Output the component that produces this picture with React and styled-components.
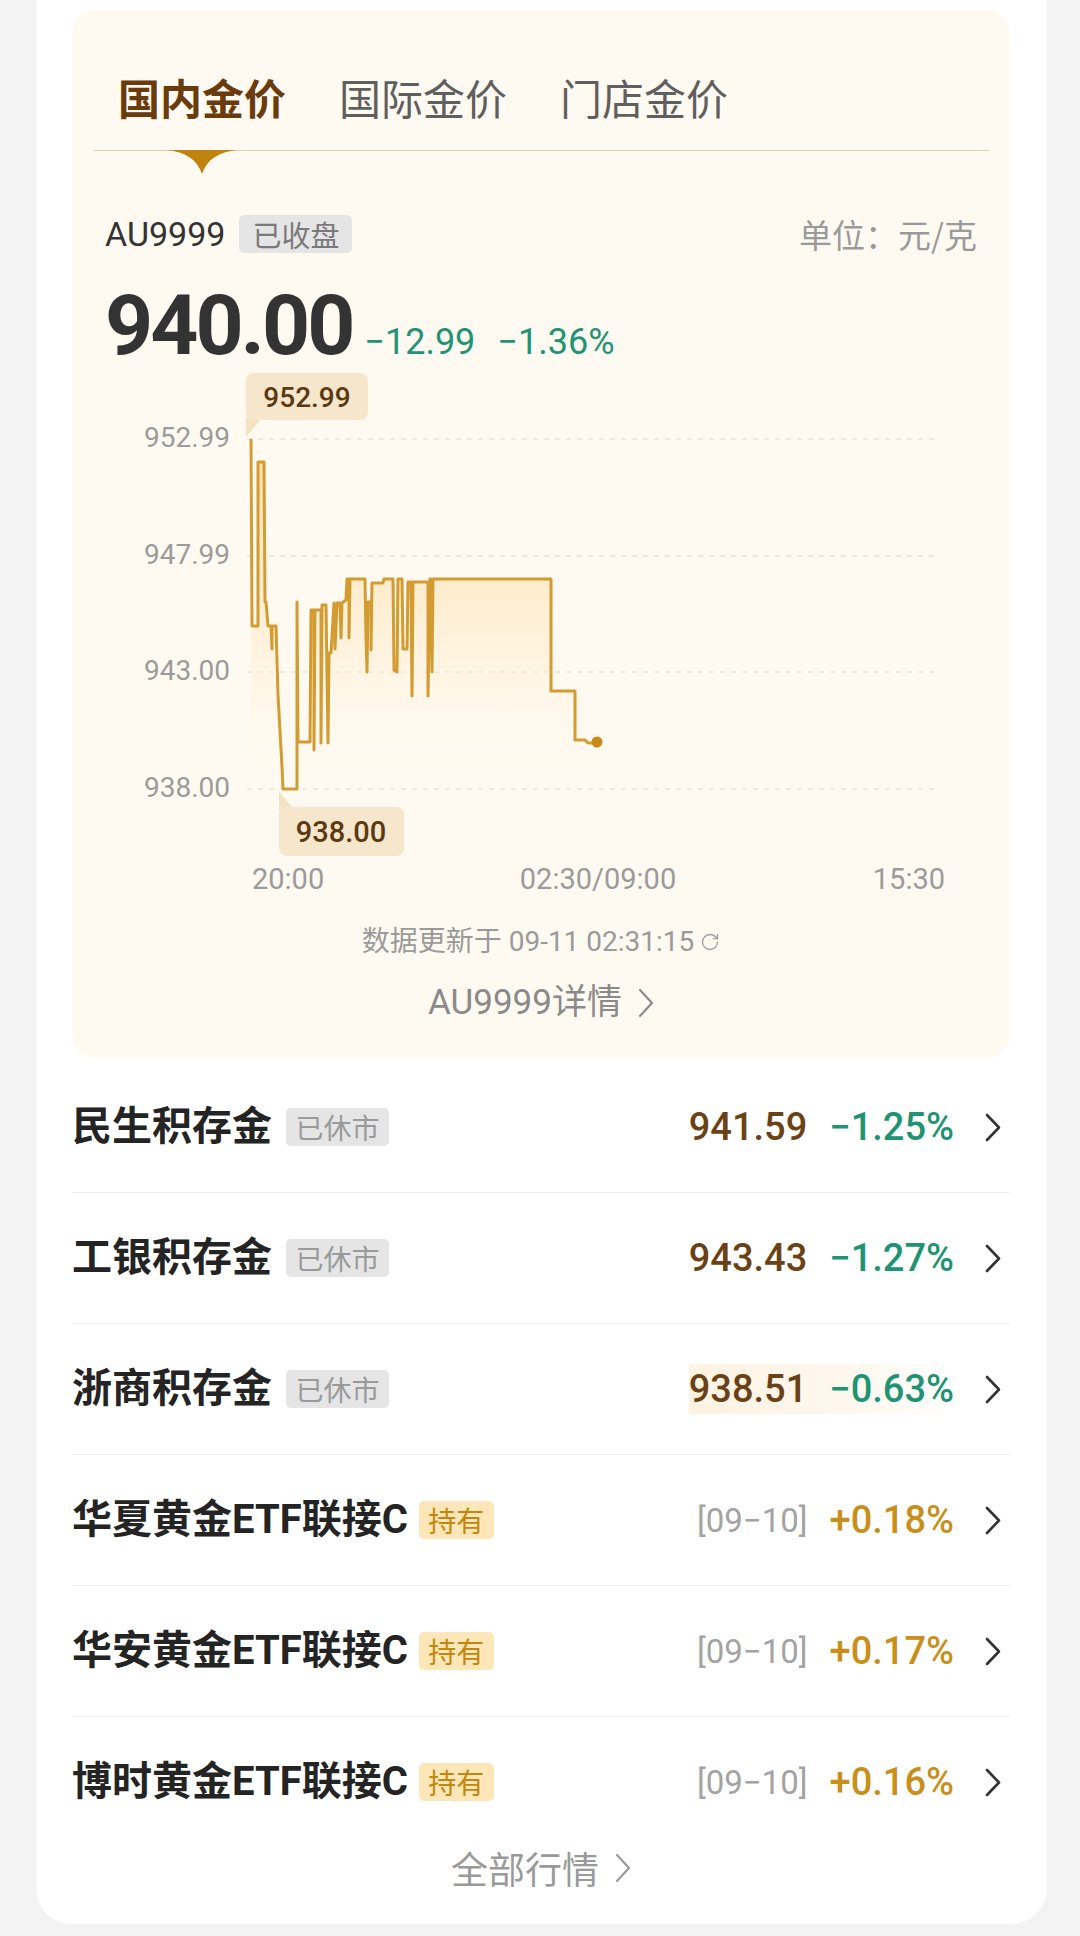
import React from "react";
import styled, { createGlobalStyle } from "styled-components";
import { RotateCw } from "lucide-react";

const GlobalStyle = createGlobalStyle`
  html, body { margin: 0; padding: 0; }
  body {
    background: #f3f3f3;
    font-family: Roboto, "Noto Sans CJK SC", sans-serif;
    -webkit-font-smoothing: antialiased;
  }
`;

const Page = styled.div`
  padding: 0 33px 12px 36px;
`;

const Sheet = styled.div`
  background: #ffffff;
  border-radius: 0 0 36px 36px;
  padding: 10px 37px 36px 36px;
`;

const QuoteCard = styled.section`
  background: #fffaf1;
  border-radius: 24px;
  padding: 0 21px 38px;
`;

const TabBar = styled.div`
  display: flex;
  gap: 53px;
  padding: 66px 0 32px 25px;
  border-bottom: 1px solid #e2d2ae;
`;

const Tab = styled.div`
  position: relative;
  font-size: 42px;
  line-height: 1;
  font-family: "Noto Sans CJK SC", sans-serif;
  font-weight: ${(p) => (p.$active ? 700 : 400)};
  color: ${(p) => (p.$active ? "#6a3b0c" : "#5f5f5f")};
`;

const Indicator = styled.svg`
  position: absolute;
  top: calc(100% + 32px);
  left: 50%;
  transform: translateX(-50%);
  display: block;
`;

const Body = styled.div`
  padding: 0 12px;
`;

const InfoRow = styled.div`
  display: flex;
  align-items: center;
  justify-content: space-between;
  margin-top: 64px;
  height: 38px;
`;

const SymbolGroup = styled.div`
  display: flex;
  align-items: center;
  gap: 14px;
`;

const Symbol = styled.span`
  font-size: 34px;
  line-height: 1;
  color: #333;
`;

const Tag = styled.span`
  display: inline-flex;
  align-items: center;
  height: 38px;
  padding: 0 ${(p) => (p.$wide ? 13 : 9.5)}px;
  border-radius: 5px;
  font-family: "Noto Sans CJK SC", sans-serif;
  font-size: ${(p) => (p.$wide ? 29 : 28)}px;
  line-height: 1;
  background: ${(p) => (p.$tone === "hold" ? "#fde7b8" : "#e5e5e5")};
  color: ${(p) => (p.$tone === "hold" ? "#c4860c" : p.$wide ? "#7a7a7a" : "#9a9a9a")};
  margin-left: ${(p) => p.$gap || 0}px;
`;

const Unit = styled.span`
  font-family: "Noto Sans CJK SC", sans-serif;
  font-size: 33px;
  line-height: 1;
  color: #9a9a9a;
`;

const PriceRow = styled.div`
  display: flex;
  align-items: baseline;
  margin-top: 31px;
`;

const BigPrice = styled.span`
  font-size: 84px;
  line-height: 1;
  font-weight: 700;
  color: #333;
  letter-spacing: -3px;
`;

const HeadChange = styled.span`
  font-size: 36px;
  line-height: 1;
  color: #1e9474;
  margin-left: ${(p) => p.$gap}px;
`;

const ChartSvg = styled.svg`
  display: block;
  font-family: Roboto, sans-serif;
`;

const UpdateLine = styled.div`
  display: flex;
  justify-content: center;
  align-items: center;
  gap: 6px;
  margin-top: 28px;
  font-size: 28px;
  line-height: 28px;
  color: #9a9a9a;
`;

const DetailLink = styled.div`
  display: flex;
  justify-content: center;
  align-items: center;
  gap: 16px;
  margin-top: 29px;
  font-size: 35px;
  line-height: 35px;
  color: #8a8a8a;
`;

const List = styled.div`
  margin-top: 4px;
`;

const Row = styled.div`
  display: flex;
  align-items: center;
  height: 130px;
  padding-right: 9px;
  border-bottom: 1px solid ${(p) => (p.$last ? "transparent" : "#eeeeee")};
`;

const Name = styled.span`
  font-size: 40px;
  line-height: 1;
  font-weight: 700;
  color: #242424;
`;

const Values = styled.div`
  margin-left: auto;
  display: flex;
  align-items: center;
  height: 50px;
  background: ${(p) =>
    p.$flash ? "linear-gradient(90deg, #fdf3e2 0%, #fdf7ee 60%, rgba(255,255,255,0) 100%)" : "transparent"};
`;

const Price = styled.span`
  font-size: 38px;
  line-height: 1;
  font-weight: 500;
  color: #6a4215;
`;

const DateTag = styled.span`
  font-size: 33px;
  line-height: 1;
  color: #a3a3a3;
`;

const Pct = styled.span`
  font-size: 38px;
  line-height: 1;
  font-weight: 500;
  margin-left: 22px;
  color: ${(p) => (p.$up ? "#c8901a" : "#1e9474")};
`;

const Chevron = styled.svg`
  display: block;
  margin-left: 31px;
  flex: none;
`;

const Footer = styled.div`
  display: flex;
  justify-content: center;
  align-items: center;
  gap: 16px;
  height: 40px;
  font-size: 37px;
  color: #9a9a9a;
`;

const pts = [[251,439],[252,626],[258,626],[258,462],[264,462],[265,602],[266,602],[268,626],[271,626],[272,649],[272,626],[276,626],[278,695],[282,767],[283,789],[297,789],[297,602],[298,742],[310,742],[311,610],[314,610],[314,750],[315,610],[321,610],[321,743],[322,605],[326,605],[328,743],[329,653],[331,653],[334,603],[335,649],[337,603],[340,603],[341,638],[342,603],[346,600],[347,579],[349,579],[349,638],[350,579],[365,579],[366,638],[367,672],[368,602],[371,602],[371,650],[372,583],[383,583],[384,579],[393,579],[394,670],[397,672],[398,579],[402,579],[403,649],[407,649],[408,582],[411,582],[412,696],[413,582],[428,582],[428,696],[430,579],[431,579],[432,672],[433,579],[551,579],[551,691],[575,691],[575,740],[585,740],[588,743],[597,743]];

const lineD = "M" + pts.map((p) => p.join(",")).join(" L");
const fillD = lineD + " L597,789 L251,789 Z";

const grid = [
  { y: 439, label: "952.99" },
  { y: 556, label: "947.99" },
  { y: 672, label: "943.00" },
  { y: 789, label: "938.00" },
];

function Chart() {
  return (
    <ChartSvg width="873" height="532" viewBox="105 368 873 532">
      <defs>
        <linearGradient id="gfill" x1="0" y1="440" x2="0" y2="780" gradientUnits="userSpaceOnUse">
          <stop offset="0" stopColor="#fbd592" stopOpacity="0.8" />
          <stop offset="0.45" stopColor="#fde4b8" stopOpacity="0.6" />
          <stop offset="1" stopColor="#fff6e6" stopOpacity="0" />
        </linearGradient>
      </defs>
      {grid.map((g) => (
        <g key={g.label}>
          <line x1="247" x2="940" y1={g.y} y2={g.y} stroke="#ebe4d8" strokeWidth="1.5" strokeDasharray="5 6" />
          <text x="230" y={g.y - 2} dy="0.36em" textAnchor="end" fontSize="28" fill="#9b9b9b">
            {g.label}
          </text>
        </g>
      ))}
      <path d={fillD} fill="url(#gfill)" />
      <path d={lineD} fill="none" stroke="#d29c32" strokeWidth="3" strokeLinejoin="round" />
      <circle cx="597" cy="742" r="5.5" fill="#c98a17" />

      <polygon points="246,417 263,417 246,437" fill="#f3e2c4" />
      <rect x="246" y="373" width="122" height="47" rx="8" fill="#f6e6cb" />
      <text x="307" y="397" dy="0.36em" textAnchor="middle" fontSize="28" fontWeight="500" fill="#5b3911">
        952.99
      </text>

      <polygon points="279,811 295,811 279,791" fill="#f3e2c4" />
      <rect x="279" y="807" width="125" height="49" rx="8" fill="#f6e6cb" />
      <text x="341" y="832" dy="0.36em" textAnchor="middle" fontSize="29" fontWeight="500" fill="#5b3911">
        938.00
      </text>

      <text x="252" y="879" dy="0.36em" textAnchor="start" fontSize="29" fill="#9b9b9b">20:00</text>
      <text x="598" y="879" dy="0.36em" textAnchor="middle" fontSize="29" fill="#9b9b9b">02:30/09:00</text>
      <text x="945" y="879" dy="0.36em" textAnchor="end" fontSize="29" fill="#9b9b9b">15:30</text>
    </ChartSvg>
  );
}

const ChevronIcon = ({ w = 16, h = 29, color = "#333", sw = 2.6, ml }) => (
  <Chevron width={w} height={h} viewBox={`0 0 ${w} ${h}`} style={ml !== undefined ? { marginLeft: ml } : undefined}>
    <path d={`M2 2 L${w - 2} ${h / 2} L2 ${h - 2}`} fill="none" stroke={color} strokeWidth={sw} strokeLinecap="round" strokeLinejoin="round" />
  </Chevron>
);

const rows = [
  { name: "民生积存金", tag: "已休市", price: "941.59", pct: "−1.25%" },
  { name: "工银积存金", tag: "已休市", price: "943.43", pct: "−1.27%" },
  { name: "浙商积存金", tag: "已休市", price: "938.51", pct: "−0.63%", flash: true },
  { name: "华夏黄金ETF联接C", tag: "持有", date: "[09−10]", pct: "+0.18%", up: true },
  { name: "华安黄金ETF联接C", tag: "持有", date: "[09−10]", pct: "+0.17%", up: true },
  { name: "博时黄金ETF联接C", tag: "持有", date: "[09−10]", pct: "+0.16%", up: true },
];

export default function App() {
  return (
    <>
      <GlobalStyle />
      <Page>
        <Sheet>
          <QuoteCard>
            <TabBar>
              <Tab $active>
                国内金价
                <Indicator width="70" height="24" viewBox="0 0 70 24">
                  <path d="M0 0 H70 C52 2 40 9 35 24 C30 9 18 2 0 0 Z" fill="#c0830f" />
                </Indicator>
              </Tab>
              <Tab>国际金价</Tab>
              <Tab>门店金价</Tab>
            </TabBar>
            <Body>
              <InfoRow>
                <SymbolGroup>
                  <Symbol>AU9999</Symbol>
                  <Tag $wide>已收盘</Tag>
                </SymbolGroup>
                <Unit>单位：元/克</Unit>
              </InfoRow>
              <PriceRow>
                <BigPrice>940.00</BigPrice>
                <HeadChange $gap={12}>−12.99</HeadChange>
                <HeadChange $gap={22}>−1.36%</HeadChange>
              </PriceRow>
              <Chart />
              <UpdateLine>
                <span>数据更新于 09-11 02:31:15</span>
                <RotateCw size={20} color="#a0a0a0" strokeWidth={1.6} />
              </UpdateLine>
              <DetailLink>
                <span>AU9999详情</span>
                <ChevronIcon w={16} h={30} color="#8a8a8a" sw={2.2} ml={0} />
              </DetailLink>
            </Body>
          </QuoteCard>
          <List>
            {rows.map((r, i) => (
              <Row key={r.name} $last={i === rows.length - 1}>
                <Name>{r.name}</Name>
                <Tag $tone={r.up ? "hold" : "closed"} $gap={r.up ? 11 : 14}>
                  {r.tag}
                </Tag>
                <Values $flash={r.flash}>
                  {r.price ? <Price>{r.price}</Price> : <DateTag>{r.date}</DateTag>}
                  <Pct $up={r.up}>{r.pct}</Pct>
                </Values>
                <ChevronIcon />
              </Row>
            ))}
          </List>
          <Footer>
            <span>全部行情</span>
            <ChevronIcon w={16} h={30} color="#9a9a9a" sw={2.2} ml={0} />
          </Footer>
        </Sheet>
      </Page>
    </>
  );
}
